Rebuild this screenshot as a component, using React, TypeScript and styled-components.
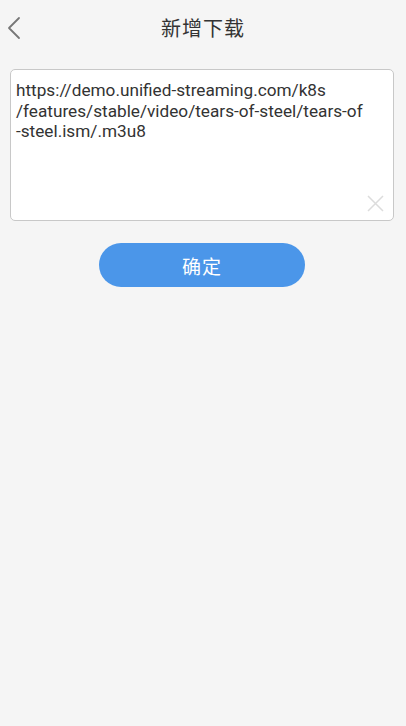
import styled, { createGlobalStyle } from "styled-components";

const GlobalStyle = createGlobalStyle`
  html, body {
    margin: 0;
    padding: 0;
    background: #f5f5f5;
  }
  body {
    font-family: Roboto, "Noto Sans CJK SC", sans-serif;
  }
`;

const Page = styled.div`
  width: 406px;
  min-height: 726px;
  background: #f5f5f5;
  display: flex;
  flex-direction: column;
`;

const Header = styled.div`
  height: 55px;
  display: grid;
  grid-template-columns: 48px 1fr 48px;
  align-items: center;
`;

const BackButton = styled.button`
  border: none;
  background: none;
  padding: 0 0 0 6px;
  height: 55px;
  display: flex;
  align-items: center;
  cursor: pointer;
`;

const Title = styled.div`
  text-align: center;
  color: #333333;
  font-family: "Noto Sans CJK SC", sans-serif;
  font-size: 20px;
  letter-spacing: 1px;
`;

const Body = styled.div`
  padding: 14px 12px 0 10px;
  display: flex;
  flex-direction: column;
  align-items: center;
  gap: 22px;
`;

const InputBox = styled.div`
  position: relative;
  width: 100%;
  height: 152px;
  box-sizing: border-box;
  background: #ffffff;
  border: 1px solid #c8c8c8;
  border-radius: 5px;
  padding: 10px 8px 0 5px;
`;

const UrlLine = styled.div`
  color: #333333;
  font-family: Roboto, sans-serif;
  font-size: 17.2px;
  line-height: 20.5px;
  white-space: nowrap;
`;

const ClearButton = styled.button`
  position: absolute;
  right: 9px;
  bottom: 8px;
  border: none;
  background: none;
  padding: 0;
  width: 17px;
  height: 17px;
  cursor: pointer;
`;

const ConfirmButton = styled.button`
  width: 206px;
  height: 44px;
  border: none;
  border-radius: 22px;
  background: #4b96e9;
  color: #ffffff;
  font-family: "Noto Sans CJK SC", sans-serif;
  font-size: 19px;
  letter-spacing: 1px;
  cursor: pointer;
`;

const urlLines = [
  "https://demo.unified-streaming.com/k8s",
  "/features/stable/video/tears-of-steel/tears-of",
  "-steel.ism/.m3u8",
];

export default function App() {
  return (
    <Page>
      <GlobalStyle />
      <Header>
        <BackButton aria-label="back">
          <svg width="16" height="24" viewBox="0 0 16 24">
            <path d="M13 2 L3 12 L13 22" fill="none" stroke="#777" strokeWidth="1.8" strokeLinecap="round" strokeLinejoin="round" />
          </svg>
        </BackButton>
        <Title>新增下载</Title>
        <div />
      </Header>
      <Body>
        <InputBox>
          {urlLines.map((line) => (
            <UrlLine key={line}>{line}</UrlLine>
          ))}
          <ClearButton aria-label="clear">
            <svg width="17" height="17" viewBox="0 0 17 17">
              <path d="M1 1 L16 16 M16 1 L1 16" stroke="#dcdcdc" strokeWidth="1.5" />
            </svg>
          </ClearButton>
        </InputBox>
        <ConfirmButton>确定</ConfirmButton>
      </Body>
    </Page>
  );
}
